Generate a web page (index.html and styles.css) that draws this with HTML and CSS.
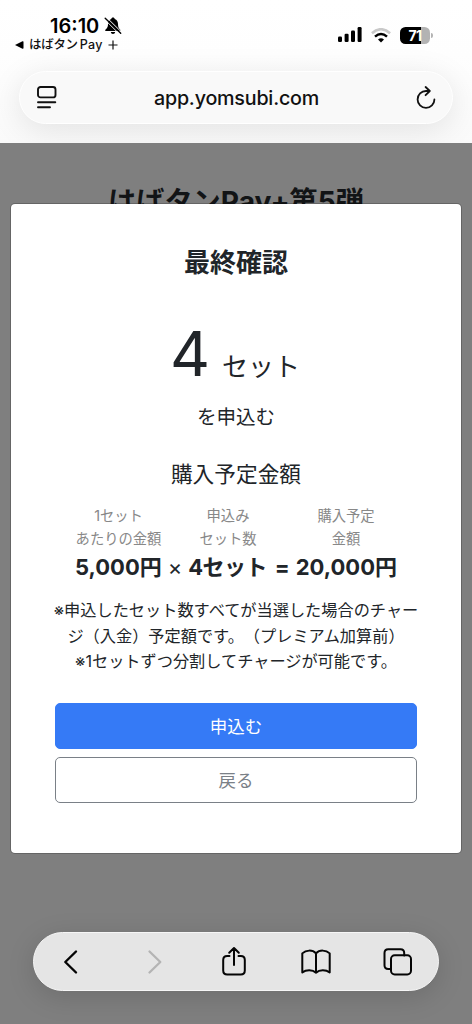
FILE: index.html
```html
<!DOCTYPE html>
<html lang="ja">
<head>
<meta charset="utf-8">
<meta name="viewport" content="width=device-width">
<title>最終確認</title>
<link rel="stylesheet" href="styles.css">
</head>
<body>
<div class="screen">
  <header class="browser-top">
    <div class="status">
      <div class="status-left">
        <div class="clock"><span class="time">16:10</span>
          <svg class="bell" width="18" height="18" viewBox="0 0 18 18"><path d="M9 .6c-1 0-1.600.6-1.700 1.300C5 2.700 4 4.600 4 7c0 3-.8 4-2.400 5.400-.8.8-.4 1.600.5 1.600h13.400c.9 0 1.300-.8.5-1.600C14.600 11 14 10 14 7c0-2.400-1-4.300-3.300-5.100C10.600 1.200 10 .6 9 .6zM6.800 15h4.400c-.2 1.300-1 2-2.200 2s-2-.7-2.200-2z"/><path d="M.2 2 15.800 17.400M2.200 0 17.800 15.400" stroke="#fff" stroke-width="1"/><path d="M1.200 1.200 16.700 16.300" stroke="#000" stroke-width="1.400" stroke-linecap="round"/></svg>
        </div>
        <div class="back-app"><svg width="9" height="8" viewBox="0 0 9 8"><path d="M0 4 7.500 .3Q8.500 0 8.500 1v6q0 1-1 .7z"/></svg><span class="app-name">はばタン<span class="latin">Pay</span></span><svg class="plus" width="10" height="10" viewBox="0 0 10 10"><path d="M5 .5v9M.5 5h9" stroke="#111" stroke-width="1.200"/></svg></div>
      </div>
      <div class="status-right">
        <svg width="24" height="16" viewBox="0 0 24 16"><rect y="9.500" width="4" height="5.500" rx="1.200"/><rect x="6.600" y="6.700" width="4" height="8.300" rx="1.200"/><rect x="13" y="3.500" width="4" height="11.500" rx="1.200"/><rect x="19.600" y="0" width="4" height="15" rx="1.200"/></svg>
        <svg class="wifi" width="20" height="15" viewBox="0 0 20 15" fill="none" stroke-width="2.500"><path d="M.9 5.200Q10-2.800 19.100 5.200" stroke="#c9c9c9"/><path d="M4 8.600Q10 3.400 16 8.600" stroke="#000"/><path d="M10 14.600 7 11.600q3-2.600 6 0z" fill="#000"/></svg>
        <span class="battery"><span class="level">71</span></span><span class="battery-tip"></span>
      </div>
    </div>
    <div class="address">
      <svg width="20" height="23" viewBox="0 0 20 23" fill="none" stroke="#111" stroke-width="1.900" stroke-linecap="round"><rect x="1" y="1" width="17.500" height="10.400" rx="2.500"/><path d="M1 16.200h17.300M1 21.300h12"/></svg>
      <span class="url">app.yomsubi.com</span>
      <svg width="20" height="23" viewBox="0 0 20 23" fill="none" stroke="#111" stroke-width="1.800" stroke-linecap="round" stroke-linejoin="round"><path d="M13.200 5H10a8.400 8.400 0 1 0 8.400 8.400M9.600 1l4.200 4-4.200 4.200"/></svg>
    </div>
  </header>
  <main class="page">
    <h1 class="page-title">はばタンPay+第5弾</h1>
    <section class="modal">
      <h2 class="modal-title">最終確認</h2>
      <p class="count"><span class="number">4</span><span class="unit">セット</span></p>
      <p class="apply-text">を申込む</p>
      <h3 class="amount-title">購入予定金額</h3>
      <div class="formula-labels"><span>1セット<br>あたりの金額</span><span>申込み<br>セット数</span><span>購入予定<br>金額</span></div>
      <p class="formula"><b>5,000円</b><span class="times">×</span><b class="sets">4セット</b><b class="equals">=</b><b>20,000円</b></p>
      <p class="notes">※申込したセット数すべてが当選した場合のチャー<br>ジ（入金）予定額です。（プレミアム加算前）<br>※1セットずつ分割してチャージが可能です。</p>
      <div class="actions"><button class="btn primary">申込む</button><button class="btn secondary">戻る</button></div>
    </section>
  </main>
  <nav class="toolbar">
    <svg width="30" height="32" viewBox="0 0 30 32"><path d="M21 5.500 10.300 16 21 26.500" stroke-width="2.400"/></svg>
    <svg class="disabled" width="30" height="32" viewBox="0 0 30 32"><path d="M12.500 5.500 23.300 16 12.500 26.500" stroke-width="2.300"/></svg>
    <svg width="30" height="32" viewBox="0 0 30 32"><path d="M10.500 10H8.200q-4 0-4 4v10.500q0 4 4 4h13.600q4 0 4-4V14q0-4-4-4h-2.300M15 19V2M10.200 6.800 15 2l4.800 4.800"/></svg>
    <svg width="30" height="32" viewBox="0 0 30 32"><path d="M15 7.400C11.500 3.600 5 3.800 1.300 7.400V26.500C5 23.600 11.500 23.400 15 26.800 18.500 23.400 25 23.600 28.700 26.500V7.400C25 3.800 18.500 3.600 15 7.400zV26.800"/></svg>
    <svg width="30" height="32" viewBox="0 0 30 32"><path d="M8 23H5.200q-3.700 0-3.700-3.700V7q0-3.700 3.700-3.700h12.300q3.700 0 3.700 3.700v2.500"/><rect x="8" y="9.300" width="20" height="19.200" rx="3.700"/></svg>
  </nav>
</div>
</body>
</html>
```

FILE: styles.css
```css
* { box-sizing: border-box; }
body { margin: 0; font-family: Inter, "Noto Sans CJK JP", sans-serif; color: #212529; text-spacing-trim: space-all; }
h1, h2, h3, p { margin: 0; }
.screen { position: relative; width: 472px; height: 1024px; overflow: hidden; background: #7f7f7f; }
.browser-top { height: 143px; background: linear-gradient(#fff 0, #fefefe 55px, #fcfcfc 100px, #fafafa); padding: 16px 19px 0; overflow: hidden; }
.status { height: 55px; display: flex; justify-content: space-between; color: #000; }
.status-left { margin-left: -4px; }
.clock { height: 20px; padding-left: 35px; display: flex; align-items: center; gap: 5px; }
.time { font-size: 20px; font-weight: 600; letter-spacing: 0; line-height: 20px; }
.back-app { height: 17px; display: flex; align-items: center; color: #111; }
.app-name { font-size: 12.500px; font-weight: 500; margin-left: 5px; line-height: 17px; letter-spacing: -.3px; }
.latin { letter-spacing: .3px; margin-left: 2px; }
.plus { margin-left: 5px; }
.status-right { display: flex; align-items: center; height: 38px; padding-right: 20px; }
.wifi { margin-left: 9px; }
.battery { margin-left: 9px; width: 30px; height: 17px; border-radius: 5.500px; background: linear-gradient(90deg, #000 0 21.500px, #b3b3b3 21.500px); display: flex; justify-content: center; align-items: center; }
.level { color: #fff; font-size: 14px; font-weight: 700; line-height: 17px; letter-spacing: -.5px; }
.battery-tip { width: 2px; height: 5px; margin-left: 1px; background: #b3b3b3; border-radius: 0 2px 2px 0; }
.address { height: 53px; border-radius: 27px; background: #f9f9f9; border: 1px solid #fff; display: flex; align-items: center; justify-content: space-between; padding: 0 16px 0 17px; box-shadow: 0 6px 32px rgba(0,0,0,.1); }
.url { font-size: 19.700px; font-weight: 500; color: #111; letter-spacing: -.2px; }
.page { height: 881px; padding-top: 39px; }
.page-title { height: 40px; margin-bottom: -19px; text-align: center; font-size: 28.200px; line-height: 40px; font-weight: 700; color: #121416; white-space: nowrap; }
.modal { position: relative; width: 452px; height: 651px; margin: 0 auto; background: #fff; background-clip: padding-box; border: 1px solid rgba(0,0,0,.2); border-radius: 5px; padding-top: 39px; text-align: center; }
.modal-title { font-size: 26px; line-height: 40px; font-weight: 700; }
.count { height: 111px; display: flex; justify-content: center; align-items: baseline; line-height: 141px; gap: 12px; padding-right: 2px; }
.number { font-size: 62px; }
.unit { font-size: 26px; }
.apply-text { font-size: 19.500px; line-height: 46px; }
.amount-title { font-size: 21.700px; line-height: 68px; font-weight: 400; }
.formula-labels { display: grid; grid-template-columns: 109px 110px 126px; justify-content: center; margin-top: -4px; padding-left: 1px; color: #888; font-size: 14.300px; line-height: 23px; }
.formula { height: 32px; margin-top: 1px; display: flex; align-items: center; justify-content: center; font-size: 22px; line-height: 32px; white-space: nowrap; }
.times { margin: 0 6px; }
.sets { letter-spacing: -.6px; }
.equals { margin: 0 6px 0 8px; }
.notes { margin-top: 15px; font-size: 16.200px; line-height: 25.500px; white-space: nowrap; }
.actions { display: flex; flex-direction: column; gap: 8px; width: 362px; margin: 28px auto 0; }
.btn { height: 46px; border-radius: 5px; font: 400 17.500px "Noto Sans CJK JP", sans-serif; padding: 0; }
.primary { color: #fff; background: #357af6; border: 1px solid #357af6; }
.secondary { color: #7a8087; background: #fff; border: 1px solid #7a8087; }
.toolbar { position: absolute; left: 33px; top: 932px; width: 406px; height: 59px; border-radius: 30px; background: #e5e5e5; border: 1px solid #f6f6f6; display: flex; align-items: center; justify-content: space-between; padding: 0 25px 0 21px; box-shadow: 0 6px 28px rgba(0,0,0,.14); }
.toolbar svg { fill: none; stroke: #050505; stroke-width: 2; stroke-linecap: round; stroke-linejoin: round; }
.toolbar .disabled { stroke: #b4b4b4; }
```
